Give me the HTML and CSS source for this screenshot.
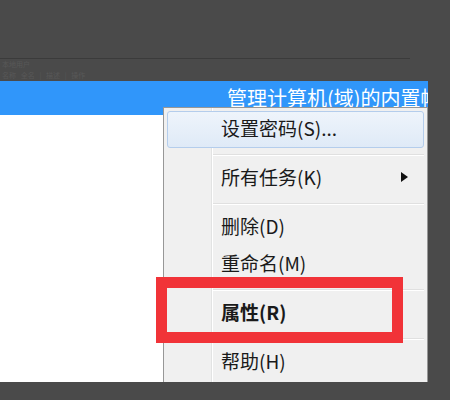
FILE: index.html
```html
<!DOCTYPE html>
<html lang="zh-CN">
<head>
    <meta charset="UTF-8">
    <meta name="viewport" content="width=device-width, initial-scale=1.0">
    <title>本地用户和组</title>
    <link rel="stylesheet" href="styles.css">
</head>
<body>
    <div class="window">
        <div class="strip">
            <div class="strip-line">本地用户</div>
            <div class="strip-line">名称 &nbsp; 全名 &nbsp; | &nbsp; 描述 &nbsp; | &nbsp; 操作</div>
        </div>
        <div class="title-bar">
            <span class="title-text">管理计算机(域)的内置帐</span>
        </div>
        <div class="content"></div>

        <!-- context menu over the list -->
        <div class="menu">
            <div class="menu-item active">设置密码(S)...</div>
            <div class="menu-sep"></div>
            <div class="menu-item">所有任务(K)<span class="arrow"></span></div>
            <div class="menu-sep"></div>
            <div class="menu-item">删除(D)</div>
            <div class="menu-item">重命名(M)</div>
            <div class="menu-sep"></div>
            <div class="menu-item bold">属性(R)</div>
            <div class="menu-sep"></div>
            <div class="menu-item">帮助(H)</div>
        </div>

        <div class="highlight-box"></div>
    </div>
</body>
</html>
```

FILE: styles.css
```css
body {
    margin: 0;
    background: #4a4a4a;
    font-family: "Noto Sans CJK SC", sans-serif;
}

.window {
    position: relative;
    width: 428px;
    padding-top: 58px;
}

.strip {
    border-top: 1px solid #3b3b3b;
    width: 410px;
    height: 23px;
    padding-left: 2px;
    box-sizing: border-box;
}

.strip-line {
    font-size: 7px;
    line-height: 11px;
    color: #585858;
    white-space: nowrap;
}

.title-bar {
    height: 34px;
    background: #3096fa;
    overflow: hidden;
    white-space: nowrap;
    padding-left: 227px;
    box-sizing: border-box;
}

.title-text {
    color: #fff;
    font-size: 20px;
    line-height: 34px;
}

.content {
    height: 267px;
    background: #fff;
}

.menu {
    position: absolute;
    left: 163px;
    top: 107px;
    width: 265px;
    box-sizing: border-box;
    background: #f0f0f0;
    border: 1px solid #979797;
    padding: 3px 3px 1px 3px;
    background-image: linear-gradient(to right, transparent 47px, #e2e3e3 47px, #e2e3e3 48px, #fff 48px, #fff 49px, transparent 49px);
}

.menu-item {
    position: relative;
    height: 37px;
    line-height: 32px;
    padding-left: 53px;
    font-size: 19px;
    color: #1a1a1a;
    border: 1px solid transparent;
    box-sizing: border-box;
}

.menu-item.active {
    background: linear-gradient(#eef4fb, #dfeaf7);
    border-color: #b4cdec;
    border-radius: 3px;
}

.menu-item.bold {
    font-weight: bold;
}

.arrow {
    position: absolute;
    right: 15px;
    top: 11px;
    width: 0;
    height: 0;
    border-left: 7px solid #111;
    border-top: 5.5px solid transparent;
    border-bottom: 5.5px solid transparent;
}

.menu-sep {
    height: 12px;
    margin-left: 46px;
    background: linear-gradient(transparent 6px, #e0e0e0 6px, #e0e0e0 7px, #fff 7px, #fff 8px, transparent 8px);
}

.highlight-box {
    position: absolute;
    left: 156px;
    top: 277px;
    width: 247px;
    height: 66px;
    border: 11px solid #f13338;
    box-sizing: border-box;
}
```
